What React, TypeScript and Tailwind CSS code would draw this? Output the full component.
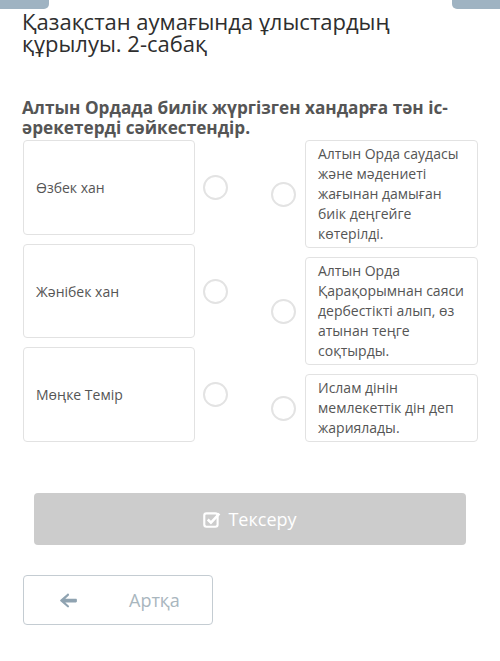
import React from "react";

const font = { fontFamily: '"Open Sans", "Noto Sans", sans-serif' };

const leftItems = ["Өзбек хан", "Жәнібек хан", "Мөңке Темір"];
const rightItems = [
  "Алтын Орда саудасы және мәдениеті жағынан дамыған биік деңгейге көтерілді.",
  "Алтын Орда Қарақорымнан саяси дербестікті алып, өз атынан теңге соқтырды.",
  "Ислам дінін мемлекеттік дін деп жариялады.",
];

function Circle() {
  return <div className="w-[25px] h-[25px] shrink-0 rounded-full border-2 border-[#e3e3e3] bg-white" />;
}

export default function App() {
  return (
    <div className="w-[500px] h-[661px] bg-white text-[#555] overflow-hidden" style={font}>
      {/* cut-off tabs from the previous screen */}
      <div className="flex justify-between h-[9px]">
        <div className="w-[49px] h-full bg-[#9fb3c2] rounded-br-[5px]" />
        <div className="w-[48px] h-full bg-[#9fb3c2] rounded-bl-[5px]" />
      </div>

      <h1 className="px-[22px] pt-[1px] text-[22px] leading-[22px] text-[#2e2e2e] font-normal">
        Қазақстан аумағында ұлыстардың құрылуы. 2-сабақ
      </h1>

      <p className="px-[22px] mt-[44px] text-[17.2px] leading-[20px] font-bold text-[#555]">
        Алтын Ордада билік жүргізген хандарға тән іс-әрекетерді сәйкестендір.
      </p>

      <div className="flex justify-between pl-[23px] pr-[22px] mt-[2px]">
        <div className="flex flex-col gap-[9px] w-[206px]">
          {leftItems.map((t) => (
            <div key={t} className="flex items-center gap-[8px] flex-1">
              <div className="w-[172px] h-full rounded-[4px] border border-[#e2e2e2] flex items-center px-[12px] text-[14px]">
                {t}
              </div>
              <Circle />
            </div>
          ))}
        </div>
        <div className="flex flex-col gap-[9px] w-[207px]">
          {rightItems.map((t) => (
            <div key={t} className="flex items-center gap-[9px]">
              <Circle />
              <div className="w-[173px] rounded-[4px] border border-[#e2e2e2] px-[12px] py-[3px] text-[14px] leading-[20px]">
                {t}
              </div>
            </div>
          ))}
        </div>
      </div>

      <div className="px-[34px] mt-[51px]">
        <button className="w-full h-[52px] rounded-[4px] bg-[#cccccc] text-white text-[18px] flex items-center justify-center gap-[7px]">
          <svg width="18" height="17" viewBox="0 0 17 16" fill="none">
            <rect x="1.2" y="2.2" width="12.6" height="12.6" rx="2" stroke="white" strokeWidth="2" />
            <path d="M4.5 8 L7.5 11 L15.5 2.5" stroke="white" strokeWidth="2.4" fill="none" />
          </svg>
          Тексеру
        </button>
      </div>

      <div className="px-[23px] mt-[30px]">
        <button className="w-[190px] h-[50px] rounded-[4px] border border-[#c4ccd2] bg-white flex items-center text-[18px] text-[#a9b6be]">
          <svg width="17" height="15" viewBox="0 0 448 400" className="ml-[36px]" fill="#8fa3b1">
            <path d="M190 376 L12 222 C-4 208 -4 192 12 178 L190 24 C205 10 228 14 236 32 L236 32 C242 46 238 60 226 70 L138 150 L420 150 C438 150 448 162 448 180 L448 220 C448 238 438 250 420 250 L138 250 L226 330 C238 340 242 354 236 368 C228 386 205 390 190 376 Z" />
          </svg>
          <span className="ml-[52px]">Артқа</span>
        </button>
      </div>
    </div>
  );
}
